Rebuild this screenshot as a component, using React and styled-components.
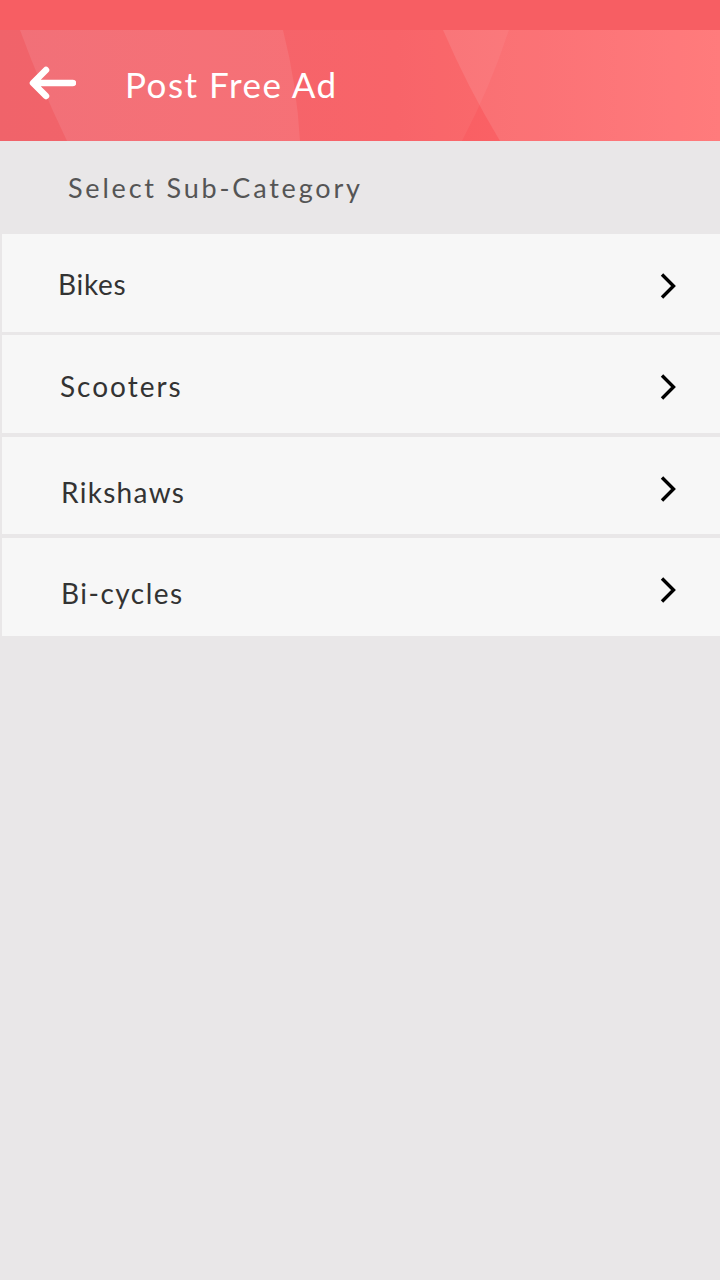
import React from "react";
import styled, { createGlobalStyle } from "styled-components";

const GlobalStyle = createGlobalStyle`
  html, body {
    margin: 0;
    padding: 0;
    background: #e9e7e8;
  }
  body {
    font-family: "Lato", "Open Sans", "Liberation Sans", sans-serif;
  }
  * { box-sizing: border-box; }
`;

const Screen = styled.div`
  width: 720px;
  min-height: 1280px;
  display: flex;
  flex-direction: column;
  background: #e9e7e8;
`;

const StatusBar = styled.div`
  height: 30px;
  background: #f75e63;
  flex-shrink: 0;
`;

const Header = styled.header`
  position: relative;
  height: 111px;
  overflow: hidden;
  display: flex;
  align-items: center;
  gap: 49px;
  padding: 0 0 3px 29px;
  background: linear-gradient(90deg, #f05b63 0%, #f85c61 55%, #ff6c6e 100%);
`;

const HeaderArt = styled.svg`
  position: absolute;
  inset: 0;
  width: 100%;
  height: 100%;
  pointer-events: none;
`;

const BackButton = styled.button`
  position: relative;
  width: 47px;
  height: 36px;
  padding: 0;
  border: none;
  background: transparent;
  display: flex;
  align-items: center;
  justify-content: center;
  cursor: pointer;
`;

const Title = styled.h1`
  position: relative;
  margin: 0;
  font-size: 35px;
  font-weight: 400;
  color: #ffffff;
  letter-spacing: 1.5px;
`;

const SectionLabel = styled.div`
  height: 93px;
  display: flex;
  align-items: center;
  padding-left: 68px;
  font-size: 27px;
  color: #555555;
  letter-spacing: 2.8px;
`;

const List = styled.ul`
  list-style: none;
  margin: 0 0 0 2px;
  padding: 0;
  display: flex;
  flex-direction: column;
  gap: 3.7px;
`;

const Row = styled.li`
  height: 97.7px;
  display: flex;
  align-items: center;
  justify-content: space-between;
  padding: 0 44px 0 ${(p) => p.$indent}px;
  background: #f7f7f7;
  cursor: pointer;
`;

const RowLabel = styled.span`
  font-size: 28px;
  color: #333333;
  letter-spacing: ${(p) => p.$spacing}px;
  padding-top: ${(p) => p.$shift * 2}px;
`;

const Chevron = styled.svg`
  width: 16px;
  height: 26px;
  margin-top: 6px;
  flex-shrink: 0;
`;

const items = [
  { label: "Bikes", indent: 56, shift: 1, spacing: 0.7 },
  { label: "Scooters", indent: 58, shift: 1.5, spacing: 2 },
  { label: "Rikshaws", indent: 59, shift: 6.5, spacing: 1.3 },
  { label: "Bi-cycles", indent: 59, shift: 6, spacing: 1.5 },
];

export default function App() {
  return (
    <Screen>
      <GlobalStyle />
      <StatusBar />
      <Header>
        <HeaderArt viewBox="0 0 720 111" preserveAspectRatio="none">
          <path d="M20 0 L283 0 Q297 55 300 111 L67 111 Q40 55 20 0 Z" fill="#ffffff" fillOpacity="0.09" />
          <path d="M-10 0 L509 0 Q490 58 462 111 L-10 111 Z" fill="#ffffff" fillOpacity="0.05" />
          <path d="M443 0 Q468 58 500 111 L720 111 L720 0 Z" fill="#ffffff" fillOpacity="0.1" />
        </HeaderArt>
        <BackButton aria-label="Back">
          <svg width="47" height="36" viewBox="0 0 47 36">
            <path
              d="M44 17 H5 M17 4 L4 17 L17 30"
              fill="none"
              stroke="#ffffff"
              strokeWidth="6.5"
              strokeLinecap="round"
              strokeLinejoin="round"
            />
          </svg>
        </BackButton>
        <Title>Post Free Ad</Title>
      </Header>
      <SectionLabel>Select Sub-Category</SectionLabel>
      <List>
        {items.map((it) => (
          <Row key={it.label} $indent={it.indent}>
            <RowLabel $shift={it.shift} $spacing={it.spacing}>{it.label}</RowLabel>
            <Chevron viewBox="0 0 16 26">
              <path d="M2 1.5 L13.5 13 L2 24.5" fill="none" stroke="#000000" strokeWidth="3.4" strokeLinejoin="miter" />
            </Chevron>
          </Row>
        ))}
      </List>
    </Screen>
  );
}
